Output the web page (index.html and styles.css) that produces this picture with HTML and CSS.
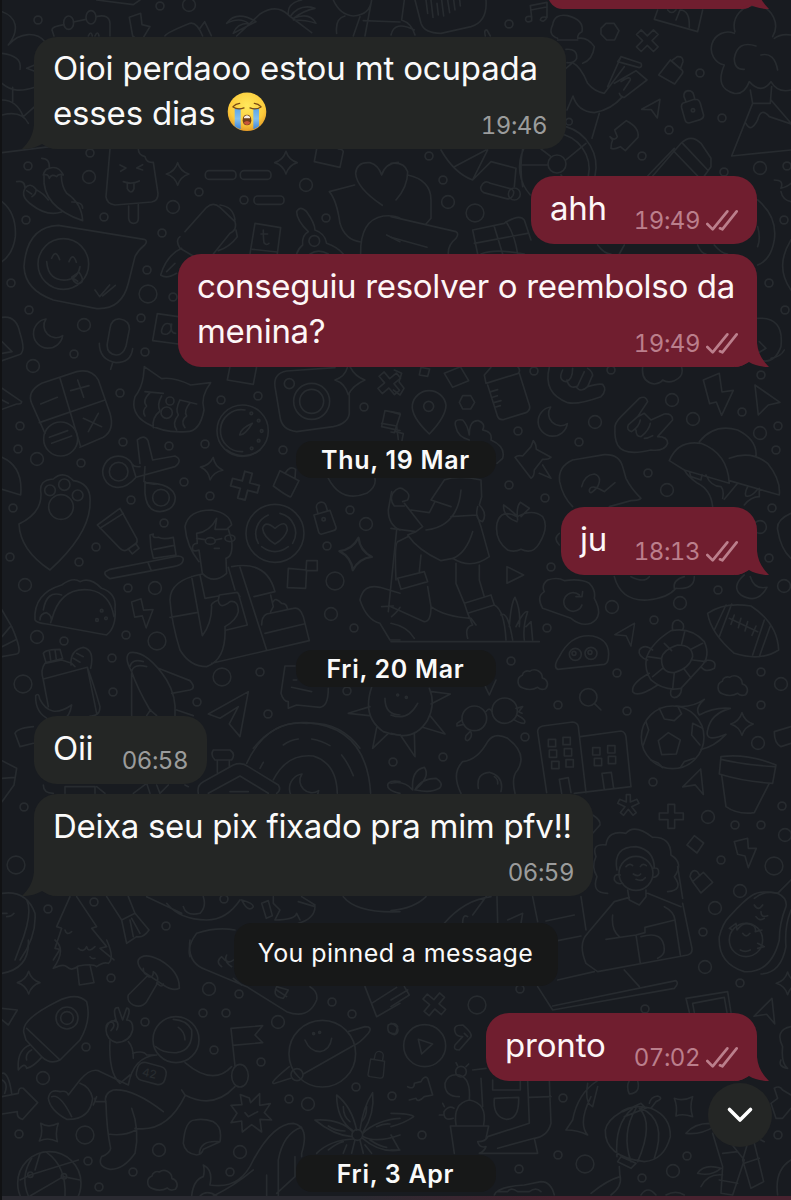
FILE: index.html
```html
<!DOCTYPE html>
<html lang="pt">
<head>
<meta charset="utf-8">
<title>Chat</title>
<link rel="stylesheet" href="styles.css">
</head>
<body>
<svg width="0" height="0" class="defs" aria-hidden="true">
  <symbol id="ticks" viewBox="945 625 102 66"><path d="M952 670l16 16 44-54M990 683l7 3 43-54" fill="none" stroke="currentColor" stroke-width="8" stroke-linecap="round" stroke-linejoin="round"/></symbol>
  <symbol id="tail" viewBox="0 0 34 44"><path d="M0 0H22V18C23 28 27 35 34 42C26 42 19 40 14 37C9 40 4 42 0 42Z" fill="currentColor"/></symbol>
</svg>
<main class="screen">
<svg class="wallpaper" viewBox="0 0 791 1200" aria-hidden="true">
  <defs>
    <path id="s" d="M38 20h0M160 6h0M90 153h0M28 166h0M199 192h0M104 217h0M26 220h0M162 233h0M326 218h0M147 270h0M244 200h0M11 283h0M29 310h0M141 318h0M74 354h0M145 352h0M120 393h0M20 426h0M18 449h0M123 442h0M169 446h0M205 444h0M81 463h0M221 400h0M258 396h0M364 407h0M283 450h0M184 482h0M173 297h0M13 508h0M10 557h0M131 500h0M210 496h0M164 523h0M96 547h0M79 562h0M350 510h0M327 546h0M128 588h0M126 635h0M64 641h0M112 658h0M113 692h0M197 702h0M260 672h0M268 714h0M354 628h0M347 691h0M509 24h0M700 73h0M722 118h0M669 130h0M642 156h0M429 156h0M443 180h0M724 172h0M784 220h0M769 283h0M787 166h0M785 310h0M534 371h0M611 370h0M761 375h0M518 431h0M579 442h0M742 412h0M778 426h0M776 450h0M648 473h0M509 485h0M545 498h0M551 567h0M772 508h0M769 558h0M718 590h0M654 620h0M547 628h0M511 661h0M617 673h0M558 705h0M627 711h0M761 672h0M761 705h0M525 737h0M443 757h0M393 762h0M653 782h0M735 825h0M761 825h0M782 806h0M721 860h0M24 807h0M48 909h0M94 902h0M166 926h0M224 899h0M111 978h0M239 994h0M145 1022h0M203 1013h0M226 1013h0M214 1050h0M86 1047h0M261 1062h0M332 1002h0M352 1014h0M356 1087h0M289 1099h0M392 1096h0M19 1134h0M88 1161h0M133 1172h0M230 1172h0M99 1187h0M703 932h0M740 983h0M520 989h0M645 1009h0M563 1098h0M558 1155h0M519 1169h0M422 1135h0M687 1156h0M642 1178h0M778 1135h0"/>
    <path id="m" d="M189 5h0M89 177h0M173 207h0M306 185h0M84 325h0M33 366h0M37 459h0M25 585h0M155 588h0M37 637h0M366 524h0M331 614h0M448 202h0M760 168h0M672 400h0M693 419h0M595 422h0M760 433h0M667 490h0M760 527h0M784 586h0M680 603h0M612 607h0M781 684h0M758 743h0M708 817h0M785 835h0M740 891h0M715 908h0M705 967h0M43 1078h0M308 1104h0M159 1150h0M240 1152h0M278 1022h0M209 989h0M673 1171h0"/>
    <path id="l" d="M475 213h0M148 294h0M157 641h0M23 684h0M222 677h0M335 581h0M16 865h0M85 1135h0M585 1164h0M477 1005h0M774 866h0"/>
    <path id="star" d="M0-34Q8-8 34 0Q8 8 0 34Q-8 8-34 0Q-8-8 0-34Z"/>
    <path id="plus" d="M-10-36h20v26h26v20h-26v26h-20v-26h-26v-20h26z"/>
    <path id="bolt" d="M-32-36l30-10 8 36 30-2-22 58-12-38-24 4z"/>
    <path id="cloud" d="M-32 24a20 20 0 0 1-2-38a16 16 0 0 1 22-12a24 24 0 0 1 38 20a19 19 0 0 1 10 32q-16 6-24-4q-20 12-44 2z"/>
    <path id="plane" d="M-34 0l66-38-12 76-16-34z"/>
    <path id="moon" d="M-6-44a44 44 0 1 0 50 50a36 36 0 0 1-50-50z"/>
    <path id="lock" d="M-28-10l48-14 18 50q2 8-8 11l-34 10q-8 2-10-6zM-16-14l-4-16a14 14 0 0 1 28-8l4 14"/>
  </defs>
  <g class="rings">
    <use href="#s" class="ring-s"/><use href="#s" class="hole-s"/>
    <use href="#m" class="ring-m"/><use href="#m" class="hole-m"/>
    <use href="#l" class="ring-l"/><use href="#l" class="hole-l"/>
  </g>

  <!-- top left: clouds, notebook, palm island, chillies, ice cream -->
  <g class="art" transform="scale(.3333)">
    <path d="M6 35C50 50 60 90 25 135C60 95 110 95 135 125M6 160C45 165 65 180 60 208M6 250C35 275 65 275 104 262M104 195L80 205L104 214M38 262V305M6 300Q50 300 70 350L104 320M6 345Q65 330 85 370M6 458L150 440"/>
    <path d="M162 108L156 90Q155 80 192 74M220 66L258 58M288 50Q328 40 330 70V108M265 108q8-18 12 0M285 108q8-18 12 0"/>
    <ellipse cx="206" cy="68" rx="15" ry="20"/><ellipse cx="273" cy="52" rx="15" ry="20"/>
    <path d="M388 52l34-12 4 34 24 6-28 46-24-18zM495 108Q500 98 570 70Q590 65 608 108M600 85l14-20 20 42M290 0L400 14L420 0"/>
    <path d="M710 108L780 42Q830 10 865 45L935 98M865 45Q860 10 905 0M870 50Q900 10 945 25Q915 30 880 55Q930 35 948 70Q920 60 880 60M768 65Q710 30 680 70Q720 50 745 70Q710 70 700 100L768 65M1000 0Q1020 45 1060 48Q1110 45 1115 0L1095 108M1090 62L1200 66M1010 100Q1005 55 1035 48M1060 108L1080 50"/>
    <path d="M50 545Q75 540 75 565Q90 545 108 568Q110 580 96 590M75 565Q60 590 96 615Q140 650 185 636M80 572l15 10M125 475Q150 475 148 505Q175 495 190 525Q175 520 170 530Q155 520 148 535Q145 520 130 525Q135 505 148 505M132 528Q125 620 248 662Q245 610 200 580Q185 560 184 528M110 570Q130 580 145 600M248 625Q248 605 215 606"/>
    <path d="M330 447L318 590Q320 612 345 615L455 606Q475 603 474 580L460 487Q440 490 435 470Q415 465 415 447M386 618V655q2 15 15 15q14 0 14-15V614M360 495l18 9-16 10M428 494l-18 10 18 6M370 545q25 10 48-2M382 548v18q12 20 20 0v-18"/>
    <use href="#star" x="533" y="522"/><use href="#star" x="858" y="488"/>
    <rect x="616" y="512" width="92" height="26" rx="11"/><rect x="721" y="512" width="92" height="26" rx="11"/><rect x="762" y="588" width="90" height="25" rx="11"/>
    <path d="M950 447L943 485L1020 502L1030 455Q1028 447 1015 447M1147 616Q1070 565 1067 520Q1070 485 1110 488Q1135 495 1145 525Q1155 490 1195 487M1064 555L988 575Q1010 600 1020 670Q1035 720 1082 726M1082 762Q1080 660 1150 648Q1185 645 1200 655M1160 705L1200 725"/>
    <path d="M6 605Q50 640 46 710Q40 760 6 785M540 710Q525 720 540 745L600 780M555 695L620 622Q640 605 660 622L705 665Q712 690 690 700L640 762M660 615Q700 620 705 660M708 690L712 710Q690 740 655 752M545 745Q500 765 482 825Q500 838 530 820M500 815L525 790M765 670L842 683L832 762M765 670L750 762M757 748L832 756M790 690q0 25 2 38q8 10 15 2M783 702h20"/>
    <path d="M925 695Q890 660 890 635Q900 615 920 635Q945 670 945 690M945 690Q975 700 980 730Q1010 740 1030 762M925 695Q905 705 908 735Q895 745 890 762M930 762Q955 745 985 762"/><circle cx="943" cy="723" r="16"/>
    <path d="M175 676L432 718Q445 722 434 735Q415 750 405 770L385 850Q365 930 290 926L160 900Q75 870 72 800Q80 680 175 676Z"/>
    <circle cx="190" cy="792" r="76"/><path d="M140 785q5 60 60 55q35-5 40-40M155 775q12-30 24 4M207 785q12-30 22 2M215 832l22-15q15 20 8 30q-18 12-30-15l18 12M285 870l14 20 30-35M308 888l38-32"/>
  </g>

  <!-- top right: microphone, wheel, chef, clouds and volcano -->
  <g class="art" transform="translate(391) scale(.3333)">
    <path d="M72 0L90 70Q100 100 150 100L240 80Q290 65 285 0M105 0l5 40M120 0l6 52M138 10l4 35M152 0l6 48M170 0l6 38M188 0l4 30M206 0l2 18M0 105Q10 60 70 90M40 0l-8 60q30 10 40 45M283 108q-5-20 5-18l10 18M404 60q-2-14 18-10v12q-14 8-18-2M422 52l-4-35 50-10 0 45q-18-4-20 8q10 10 20-8M420 30l46-9"/>
    <path d="M500 115Q470 105 485 75Q490 40 530 47Q580 60 573 95Q560 100 560 115Q590 110 610 140Q605 180 575 190M500 120l60 0M525 148Q560 145 557 175Q550 190 528 188M525 205L545 188Q570 200 590 250Q610 275 640 280L700 200M690 170L750 190Q755 200 745 203L680 185ZM650 260L690 170M670 250L735 212L768 240L700 292Q690 292 685 280M690 245q30-20 28-5l-20 30M528 330L546 288Q560 335 610 338Q660 330 695 290M625 340L603 415"/>
    <path d="M525 380A125 125 0 0 1 612 528M500 400A107 107 0 0 1 592 528M398 447A125 125 0 0 0 418 585M395 447Q385 500 395 560M395 495H470M525 480L585 430M510 525l8 10M480 470L450 447"/><circle cx="498" cy="492" r="27"/><circle cx="534" cy="365" r="10"/>
    <path d="M630 85l15-15h24l15 22-13 28h-24l-17-18zM803 225l35-45 35 30q5 5 0 12l-22 30zM845 180l14-10q18-2 17 15l-8 22M875 310l35-12q14-2 18 12l10 36q0 10-10 13l-34 10q-10 0-12-10l-10-35q-2-10 3-14M885 305l-6-15q-2-15 12-18q14 0 17 12l4 15"/><circle cx="906" cy="331" r="5"/>
    <use href="#plus" transform="translate(769 122) rotate(45)"/>
    <path d="M752 328l55-30-8 56-18-25zM657 410q15 15 22 0l-8-20 35-28q40 20 35 50l-38 40-15-12q-20 10-28 5q0-15 5-25z"/>
    <path d="M785 528L870 430Q900 400 930 430L960 475V500L940 528M845 450L920 528M770 528L850 445M875 430L950 510M800 30L790 58L920 95L935 30M830 30q12 15 25 0M855 60l12-30q30 0 28 52"/>
    <path d="M1032 95A62 62 0 1 1 1145 110M1030 100A50 50 0 1 0 1000 195M1000 195Q970 265 1030 280Q1060 285 1075 245Q1110 285 1140 245Q1160 280 1200 270M1095 138Q1040 120 1030 175Q1030 210 1060 208M1110 165Q1150 155 1160 210M1150 115Q1170 100 1200 105M1078 270L1085 310H1138L1142 260M1085 310L1022 468L1200 450M1140 300L1200 370M1065 370Q1080 400 1100 360Q1110 320 1135 350L1200 372"/>
    <path d="M0 490Q40 485 50 515Q50 560 15 600M50 525Q120 540 120 600V655L105 672M0 650L195 695Q205 700 195 715Q170 735 172 762M0 712L108 742M150 450Q190 520 245 540L290 450M190 500L285 450M245 540L300 485L375 505L370 560M270 560q10-22 28-10l60 16q15 5 8 20q-8 14-20 10l-68-18q-12-8-8-18M245 690Q245 690 340 670Q385 640 400 660L420 720M245 690L260 762M310 680L335 762M345 665Q370 700 380 762M250 730L410 700M270 762Q310 745 400 762"/><circle cx="370" cy="582" r="18"/>
    <path d="M1100 600Q1160 650 1150 720Q1140 780 1100 795M1100 680Q1110 715 1100 740M620 735Q640 762 660 762M700 735l-15 27M920 735q10 25 25 27M970 735q20 25 40 27M1150 540q30 0 20 25q20-5 30-15M1170 575q5 25 30 30M1200 720Q1150 800 1200 870M1100 955Q1180 950 1170 1040Q1150 1095 1105 1080M1105 1025l20 20-20 12"/>
  </g>

  <!-- left, upper middle: calculator, cat, camera, timer, scissors -->
  <g class="art" transform="translate(0 200) scale(.3333)">
    <path d="M6 352Q50 345 60 400Q80 460 55 465L6 482M6 425l30 30-30 5M6 565L65 605Q65 612 50 612L6 628M25 610l-19-10"/>
    <use href="#moon" x="144" y="401"/>
    <path d="M330 385q5-30 30-28q30 5 28 32l-10 50q-10 28-30 26q-30-5-26-35zM298 430q0 50 50 58q45 0 50-42M338 488l-6 20M535 350L472 341L458 422L535 432M485 390q5-25 25-18q10 20-8 30q-20 4-17-12M515 372q-5 28 12 28M690 500L682 540L760 553L770 500"/>
    <path d="M95 610Q80 575 125 550L230 515Q275 505 295 540L330 640Q345 690 310 712L240 742M95 610L135 700M180 535L242 740M118 668L315 600M122 612l50-20M212 572l55-15M233 540l18 52M250 655l55 25M295 640l-30 55M148 712l55-20M155 730l60-22"/><circle cx="182" cy="717" r="51"/>
    <path d="M433 500L485 536Q520 530 572 555L632 548Q600 590 612 630Q600 695 560 695Q490 700 440 670Q390 640 405 590Q425 565 430 530ZM435 575L490 580M540 600L590 612M450 578q-25 25-10 40q-15 15-5 30M485 588q-15 25-5 45q-25 20-20 50M540 600q-15 30-5 45q-20 25-5 45M570 608q-20 25-10 40q-20 15-5 35"/><circle cx="500" cy="638" r="17"/><circle cx="510" cy="603" r="12"/>
    <circle cx="728" cy="692" r="77"/><path d="M728 755A63 63 0 1 1 735 630M757 670q-35 15-38 35q15 2 38-35"/><circle cx="754" cy="640" r="4"/><circle cx="776" cy="662" r="4"/><circle cx="785" cy="693" r="4"/><circle cx="776" cy="722" r="4"/><circle cx="755" cy="745" r="4"/>
    <path d="M825 560Q820 520 860 513L1005 503M1048 582V640Q1045 670 1000 680L890 695Q845 690 840 650L825 560"/><circle cx="935" cy="604" r="54"/><circle cx="935" cy="604" r="36"/><circle cx="868" cy="551" r="15"/>
    <path d="M1050 500Q1065 530 1095 540Q1060 555 1045 584Q1035 550 1005 540Q1035 530 1042 503"/>
    <use href="#plus" transform="translate(1168 550) rotate(50)"/>
    <path d="M1155 632L1145 680L1200 692M1155 632L1200 640M1145 670l45 8 5 40"/>
    <path d="M412 720q20-18 32 2L458 780L525 768Q550 780 525 800L408 832M412 720L420 790M435 800L432 845Q450 855 470 852"/><circle cx="356" cy="815" r="28"/><path d="M395 790L408 832Q380 865 350 862A47 47 0 1 1 395 790Q402 802 420 800"/>
    <use href="#star" transform="translate(635 806) rotate(8)"/><use href="#plus" transform="translate(735 857) rotate(15) scale(1.15)"/>
    <path d="M840 812L897 842L873 890Q870 895 820 858ZM855 820q15-25 32-12l-2 28M6 772Q70 800 62 885L6 868"/>
  </g>

  <!-- right, upper middle: jar, fists, pushpin, mushrooms, hiker -->
  <g class="art" transform="translate(391 350) scale(.3333)">
    <path d="M10 60l22 10-8 25 15 20-12 20-20-15M90 52l26 5-6 22-25-4zM160 70l48-20 25 42-48 20zM0 185l28 8-18 55-10-2M15 245l22 6-4 20"/>
    <path d="M115 252Q60 200 64 165A51 50 0 0 1 165 165Q165 200 115 252Z"/><circle cx="113" cy="169" r="15"/><path d="M205 157l10-20h24l12 20-12 20h-24z"/>
    <path d="M285 100L382 70Q390 60 380 50M285 100L280 75L300 52M290 105L320 200Q325 212 340 208L405 188Q420 180 415 165L385 70M300 125l20-6M305 142l14-5M308 158l22-6M312 172l16-5"/>
    <path d="M475 52Q455 130 530 158Q560 165 630 140Q650 120 635 103Q620 100 590 110M515 60Q500 90 525 95Q545 90 545 55M528 90Q535 120 560 108L580 65M555 110Q570 130 590 110L605 75M590 55Q605 65 605 78"/>
    <use href="#moon" x="485" y="215"/>
    <path d="M672 235Q670 220 690 200L745 145Q765 135 770 155L740 200L760 190L780 210L820 192Q845 190 845 210L800 260Q830 260 830 280Q820 305 780 300Q700 320 680 285Q670 265 672 235M740 200L712 225Q705 240 722 245Q745 230 748 210M735 240Q735 260 750 260Q775 240 778 220M760 265q10 0 25-8"/>
    <path d="M755 52Q750 95 790 102Q810 100 815 90Q830 100 850 92Q880 80 872 52M937 90l48-20 8 56 34-5-35 75-16-40-20 5zM1092 105l75 52-35 8-30 30z"/>
    <path d="M835 332Q860 270 930 280Q1010 310 1015 400L880 360M835 332L880 360M925 275Q970 220 1040 240Q1100 270 1095 320M1015 325Q1080 300 1130 340Q1170 390 1165 435L1015 392M880 360Q890 380 920 400Q960 420 965 470M895 365l5 15 30 10 3-16M945 375Q960 410 990 410Q1000 420 995 445M1000 448L1040 400M1105 415L1105 440Q1080 440 1060 465M1070 410q-10 20-5 28q15 5 35-20"/>
    <path d="M427 272Q435 280 436 298L480 322Q470 330 455 328L430 360Q430 380 420 385L372 322Q380 315 395 318L420 290ZM455 345L480 385L445 370M195 232Q185 205 215 210Q230 225 235 255Q235 210 262 212Q285 220 275 240Q305 245 300 270M195 232Q200 260 235 270M300 270Q345 290 335 325L318 340"/>
    <path d="M545 330L640 314Q685 312 695 350L705 385Q720 415 750 445Q745 452 720 452L655 470M545 330Q500 350 506 395Q515 440 545 470M572 410Q580 375 610 372Q635 380 620 410Q595 440 595 420Q600 400 640 425L672 398"/>
    <path d="M378 500Q330 475 318 520Q310 570 350 600Q370 608 390 598Q425 615 445 580Q475 530 455 500Q425 475 378 500ZM380 500Q360 480 338 465Q335 500 378 515M380 510Q375 470 388 457L415 475L390 500"/>
    <path d="M5 430q20-25 35-10q20 10 10 30l-15 5M5 430q-10 20 5 38h30M40 460L95 530L75 545L0 535M160 390L120 450L180 470M60 480L115 488L132 455M210 420Q200 530 105 540M160 390Q200 375 270 390L272 440L265 465Q290 490 275 515Q250 510 260 470M180 500L258 495L270 530L295 620Q240 660 185 625L150 632Q80 600 50 555L75 545M245 545Q225 610 185 625M90 615L85 665M20 575Q10 580 15 690M20 575L50 560M20 685L100 665L110 695L30 718ZM110 710L120 770Q120 815 100 815L0 770M195 640V700L220 760M265 645V690L280 740M220 760L300 735L310 765L230 790ZM230 790L245 825Q220 830 230 865M310 765Q340 780 345 870M120 770Q160 800 240 805L255 825M0 875H445M0 820Q50 830 70 865M330 795Q350 780 365 870M355 830Q360 760 372 742Q390 780 385 830M375 830Q400 780 410 785Q395 830 400 870M405 830l15-15 5 55"/>
    <path d="M348 650V700L398 675ZM470 690Q500 680 520 692Q570 685 595 700Q615 720 610 745Q640 800 600 820Q570 830 540 805L455 775Q435 740 460 725Q450 705 470 690Z"/><path d="M573 765A28 28 0 1 1 565 735M555 740l18 0 2-15"/>
    <path d="M670 680Q690 755 770 750Q830 745 855 715Q910 720 910 680M720 680q40 20 55 0M850 715q-5-25 30-35M505 550q-20 15 0 35"/><path d="M1060 675Q1020 710 1050 735Q1100 765 1128 712Q1090 720 1078 680"/>
    <path d="M1200 490Q1155 510 1160 540Q1170 600 1200 625M1140 25Q1170 20 1180 0"/>
  </g>

  <!-- left middle: paw, toothbrush, reader, taco, bottle -->
  <g class="art" transform="translate(0 450) scale(.3333)">
    <circle cx="150" cy="121" r="16"/><circle cx="193" cy="104" r="17"/><circle cx="233" cy="136" r="16"/><circle cx="183" cy="171" r="37"/><circle cx="483" cy="143" r="25"/>
    <path d="M123 130Q115 90 160 87Q190 60 220 92Q275 100 270 160Q270 250 150 360Q60 300 57 222Q125 190 123 130ZM435 95L435 130Q440 185 480 185Q525 180 526 143Q520 100 435 98"/>
    <path d="M292 225L360 175L410 265Q415 280 402 285L380 300Q370 305 360 295ZM300 235L370 190M385 297l22-17 10 15-20 17zM450 255Q450 290 460 325L528 315L520 262Q490 270 475 262Q455 265 460 252zM462 298l60-12M330 358L535 318Q555 320 548 335Q545 345 520 350L330 386Q310 375 316 365ZM445 340l8 20"/>
    <path d="M597 335Q560 290 555 230Q565 180 635 180Q690 190 695 225L680 238H645L650 205Q630 245 590 250L592 280Q575 280 578 300Q585 305 597 300L607 370Q640 405 680 370L678 325Q700 320 695 270L685 238M590 265l25 4M645 270l20-4"/><ellipse cx="631" cy="273" rx="15" ry="10"/><ellipse cx="690" cy="265" rx="15" ry="10"/><path d="M643 295h15"/>
    <path d="M607 372Q510 390 510 450Q515 520 540 600Q570 650 620 650Q680 630 675 530M510 502L590 488M575 380L607 557Q635 520 635 470Q630 460 655 450L658 435L712 427L720 440M600 375L615 445L655 438M685 352L705 420M695 350Q800 330 825 425L762 440M720 352L800 600M675 530Q710 510 715 485Q715 450 690 455Q660 480 655 452M715 430L742 525L680 540M635 640L928 572L910 500Q900 470 880 475L800 492Q785 500 785 525M795 550L912 522M812 435L820 470Q815 480 812 485M820 455Q825 440 845 460Q860 460 862 475"/>
    <circle cx="825" cy="250" r="87"/><path d="M825 282Q790 260 788 235Q795 210 825 235Q860 205 862 240Q855 265 825 282ZM775 280A60 60 0 0 1 805 195M840 190A60 60 0 0 1 878 280M865 290Q825 320 785 290"/>
    <use href="#lock" transform="translate(970 205)"/><circle cx="971" cy="208" r="5"/>
    <use href="#star" transform="translate(1067 312) rotate(10) scale(1.45)"/>
    <path d="M865 355l55 5-3 55-55-2zM920 332h32v30h-34zM985 85Q1025 160 1100 130Q1130 110 1125 85M680 0Q730 35 780 0"/>
    <path d="M105 510Q100 430 185 405Q220 380 240 395Q270 380 305 415Q350 430 345 475Q350 530 320 555L140 522Q110 520 105 510ZM155 510Q180 410 270 420Q330 430 342 500M130 480Q140 420 185 435M120 510q0-20 20-22q20 10 12 30"/><circle cx="305" cy="482" r="4"/><circle cx="318" cy="505" r="4"/><circle cx="291" cy="510" r="4"/>
    <use href="#bolt" transform="translate(425 490) scale(.95)"/>
    <path d="M130 610q5-12 50-12l8 28-50 12zM148 602l4 28M165 600l4 28M135 640L185 630L215 640L225 650M135 640Q120 660 130 690L145 770M130 687L262 652Q280 700 300 770Q300 800 270 798M262 652L290 790M213 645Q210 600 250 592Q285 600 272 655M220 625l20 12M230 610l20 10M107 737q10-10 12 10Q150 810 215 765Q210 800 185 815M107 737Q105 790 150 810"/>
    <path d="M395 665Q370 620 390 608Q440 600 500 690Q530 740 525 797M395 665Q410 710 450 780L470 797M395 665Q400 640 440 650M390 650Q395 625 430 635M475 655L570 692Q590 715 570 720L515 730M395 670V797M530 780L580 797M440 797l12-18"/>
    <path d="M625 792L745 725L720 860L688 822L715 770L660 805ZM855 648H885M855 648L843 730Q850 755 865 755V775L890 765L960 772Q985 770 985 715M880 690h10M875 712L935 725M1110 770L1045 790L1108 797M1115 712Q1085 800 1150 845Q1175 855 1200 855M1130 833L1118 895L1165 850M1155 745q0 50 45 50"/>
    <path d="M760 895Q830 810 920 820Q1020 815 1080 895M850 885q20-15 45-18M935 867q30 5 55 20M45 850Q50 835 100 830M45 850L60 890L100 880M6 480L35 530Q70 610 50 612L6 620M6 560l25-30M6 590l40-20"/>
    <path d="M1165 180Q1165 225 1200 240M1175 125L1165 180M1080 450Q1090 400 1140 412L1200 430M1080 450Q1100 510 1140 520L1170 570H1200M1190 240L1165 485M1145 470l35-2M1175 500q20-18 25-28"/>
  </g>

  <!-- right middle: turtle, football, buildings, glasses, sun -->
  <g class="art" transform="translate(391 600) scale(.3333)">
    <path d="M500 208Q485 200 505 170Q540 100 605 108Q660 120 652 175Q650 190 640 193Z"/><circle cx="553" cy="163" r="18"/><circle cx="600" cy="160" r="18"/><circle cx="549" cy="160" r="6"/><circle cx="597" cy="157" r="6"/>
    <use href="#plane" transform="translate(702 104) scale(.9)"/><use href="#cloud" x="428" y="240"/><use href="#cloud" x="1028" y="258"/>
    <path d="M766 175Q780 130 840 92Q900 80 940 125Q960 170 930 200L870 265Q820 275 780 240Q760 210 766 175ZM812 175Q815 150 860 135Q905 135 905 170Q895 205 850 218Q810 220 812 175ZM820 130l22 22M882 92l-10 40M935 130l-35 18M905 180l40 5M880 208l20 26M850 218l-5 50M815 205l-30 25M770 170l42 6M845 90Q840 60 862 60Q885 70 875 90M770 180Q740 170 745 150Q760 130 785 150M775 220Q720 250 725 275Q740 295 800 255M945 180Q980 180 970 205Q945 220 930 200M840 270Q835 290 850 293Q870 290 872 265"/>
    <path d="M950 40Q1000 5 1080 18Q1160 70 1163 150Q1110 185 1030 160Q960 100 950 40ZM1005 15L970 90M1022 12L985 110M1120 60L1085 165M1138 78L1105 170M1015 55L1100 95M1030 45l-10 28M1050 55l-8 28M1070 65l-8 28M1095 78l-12 28"/>
    <circle cx="592" cy="292" r="26"/><path d="M610 310l20 20"/><circle cx="250" cy="355" r="37"/><circle cx="341" cy="332" r="38"/><path d="M285 335q10-15 18 0M213 360l-15 10 0 8 20-5M375 325l20-5-12 15 10 5M378 345q30 15 22 25q-15 0-32-12M240 392l-15 15q-5 15 5 15q15-10 10-25"/>
    <path d="M0 400Q70 425 110 360Q135 310 115 265M122 275L178 282L120 312M118 348L162 402L95 382M70 398L72 470L28 405M0 345Q50 365 80 310"/><circle cx="20" cy="285" r="3"/><circle cx="46" cy="292" r="3"/><path d="M315 240l-20 45-12-25"/>
    <path d="M210 580Q180 520 215 485Q260 480 290 425Q310 395 350 415Q410 460 380 510Q360 530 372 580M262 565Q255 520 295 517Q340 530 330 575"/><path d="M310 530q12 8 10 22M0 550Q40 540 65 570Q60 510 100 502Q120 530 72 570Q90 535 135 535Q160 550 145 565Q120 580 75 570"/>
    <path d="M467 578L440 395Q440 382 455 378L545 366Q560 368 562 380L585 578M568 410L690 393Q702 395 705 410L720 560L550 580M512 580L505 538L532 533L540 578M640 568L633 520L661 517L668 565"/>
    <path d="M472 418h22v22h-22zM475 450h22v22h-22zM482 484h22v22h-22zM516 412h22v22h-22zM520 446h22v22h-22zM525 479h22v22h-22zM605 443h22v22h-22zM650 437h22v22h-22zM610 475h22v22h-22zM652 469h22v22h-22z"/>
    <circle cx="845" cy="412" r="94"/><path d="M832 398l36 22-12 42-44 2-10-42zM805 325l15 32 30 5 22-20-10-20M765 365l8 25-16 45M935 385l-30-15-3 35 25 30M780 480l20 8 15 15M870 500l10-15 30-10M855 318Q900 325 940 298Q910 325 925 345Q970 320 1018 325Q960 340 950 390Q940 430 1005 403Q970 440 930 448"/>
    <use href="#star" x="1053" y="372"/><use href="#plane" transform="translate(908 552) rotate(-15)"/>
    <path d="M990 470Q1070 460 1155 495L1145 550Q1060 545 985 522ZM990 478Q1060 495 1150 500M992 525L1005 620Q1040 645 1090 638L1135 550M1200 380L1150 395Q1150 430 1170 440L1200 430"/>
    <path d="M-6-34h12v22l20-8 6 12-22 10 14 18-10 8-14-18-14 18-10-8 14-18-22-10 6-12 20 8z" transform="translate(712 618)"/><use href="#plus" x="841" y="649"/>
    <path d="M605 645q25 15 22 30l-22 25M615 770Q600 730 645 735Q650 690 705 700Q730 670 785 712Q840 710 840 765Q880 790 850 830Q880 870 830 875M615 770Q600 800 618 830Q600 880 650 880"/><circle cx="735" cy="820" r="51"/><path d="M678 810Q665 740 735 740Q790 750 790 805M688 825q-20-5-18 15q8 15 25 10M785 805q20-5 18 15q-5 12-18 12M705 800q12-12 20-3M748 800q8-12 18-3M727 822q15 10 22 0M735 838q18 8 28-5M860 800L875 895"/>
    <path d="M888 735l22-28 28 22-20 30zM1030 725l40-10 2 30 24 0-24 58-10-35-22-5zM905 845l32-28 28 30-35 32zM905 845l-8-15q5-25 22-15l8 12M1090 895Q1120 870 1160 880L1200 840"/>
  </g>

  <!-- left lower middle: house, vinyl, pine, bow -->
  <g class="art" transform="translate(0 700) scale(.3333)">
    <path d="M6 182L50 205L42 255L6 305M6 235L45 232M740 190Q800 60 920 68Q1100 80 1112 280M820 240Q860 160 940 168Q1010 190 1012 280M780 205l10-18M1025 165q20 25 35 62"/>
    <path d="M640 150h50q18 12 5 30h-50q-15-15-5-30M652 182v35M688 182v18M595 280Q590 255 610 245L700 195Q725 185 745 200L835 255Q845 270 830 280M625 280L720 228L805 280M690 275h55M400 280L440 250L450 280M470 255l10 25 25-25M130 255q0 25 30 25M195 280V260h90v20M290 260l25 20M555 255l10 5"/><use href="#moon" x="912" y="266"/>
    <path d="M1200 280Q1155 270 1165 250Q1175 240 1200 245M6 580Q80 570 105 640Q110 710 60 780M80 600Q100 640 60 740L45 780M20 650q15 0 22-10M6 640h15"/>
    <path d="M210 590L170 680L185 685L165 745L180 748L160 780M230 590L290 680L275 685L320 740L300 745L342 780M195 690q5 18 20 5M235 745q15 15 25-5q5 20 25 0M270 770q5 8 15 5"/>
    <path d="M320 590L365 660L405 640L385 590M405 640L447 690Q430 715 410 710L380 730L365 660M390 660l10 50M395 655l25 45M440 590L545 640M500 610Q540 660 620 660Q680 660 720 600M550 620Q560 650 600 640Q620 620 610 590M725 600q35 10 35 20q-15 20-35-20M785 610l20-8 12 45-18 8zM820 590v20l20 20-15 30q60 0 65-20l10 20M905 590l40 25M895 605l50 15q0 35-50 50M1030 590Q1070 640 1200 635M705 690Q650 680 590 700Q560 740 570 770"/>
  </g>

  <!-- lower left: rocket, astronaut, planet, lily, globe -->
  <g class="art" transform="translate(0 940) scale(.3333)">
    <path d="M6 100Q90 85 85 0M165 0Q200 30 160 85Q190 70 200 80Q215 95 235 78Q280 70 290 80Q310 65 325 70Q345 55 320 0M232 82L238 135L282 128L270 75"/>
    <use href="#star" x="86" y="128"/>
    <path d="M72 280Q60 240 170 185Q230 155 260 185Q275 240 240 300L180 360Q150 375 125 350L78 300ZM80 265L180 360M90 315Q50 330 55 390Q75 365 80 385Q100 380 125 352M95 330q-20 10-15 30M6 205L52 210L25 255L6 240"/><circle cx="201" cy="234" r="33"/><circle cx="201" cy="234" r="19"/>
    <path d="M415 60Q430 35 480 60Q540 95 538 145Q520 155 490 135L430 95Q410 75 415 60ZM430 85Q430 105 445 105L385 165Q380 185 400 195Q425 205 440 185L472 130Q485 145 490 132M445 110Q460 115 460 95Q480 110 470 130M570 0Q560 70 620 90L740 140L860 215Q925 240 950 180Q955 155 930 140M665 80q-20-15 0-30q20 25 35 10M680 45q-10 20 15 35M700 115l25 20M830 140l35 10-15 25q-35-5-20-35M860 170l-30-20"/>
    <path d="M318 270Q325 235 350 245Q335 200 355 203L368 240L380 204Q395 205 380 240Q400 240 398 270Q390 305 350 308Q320 300 318 270ZM318 265q0-20 20-18q10 10-5 25M345 240q15 10 5 30"/>
    <path d="M330 300Q325 400 360 430L390 405M385 305Q400 320 400 355M398 340Q430 330 440 345L465 345M385 435L295 392Q270 385 240 420L205 465M385 435Q400 350 470 345M555 368Q640 440 695 380M545 450L555 465Q640 510 705 440M555 468Q500 580 405 565M490 515Q400 445 340 450Q310 460 318 490Q320 570 332 625M395 505Q420 570 405 640Q370 690 330 688Q290 680 305 650Q330 640 332 625M325 582Q370 590 408 570M145 475Q150 445 180 455Q200 450 205 465M145 475Q150 510 200 538Q270 540 278 475Q270 440 240 430M155 470Q180 460 215 530M285 475L285 485L318 485M290 470l-10 25"/><circle cx="528" cy="299" r="69"/><path d="M467 320Q490 340 530 338Q580 330 575 270Q560 240 520 238M535 262Q555 275 555 300"/><rect x="410" y="373" width="88" height="55" rx="20" transform="rotate(15 454 400)"/><text x="427" y="412" transform="rotate(13 450 400)">42</text>
    <ellipse cx="720" cy="407" rx="25" ry="34"/><path d="M705 378L693 265L788 257L765 285L788 308L698 316M6 400Q25 395 35 460M6 470L55 460Q55 440 70 445L113 488L68 538Q50 535 52 515L6 522M6 420q20 10 8 40M122 550Q145 565 175 550Q165 575 172 605Q145 590 118 603Q130 580 122 550Z"/>
    <circle cx="967" cy="341" r="100"/><circle cx="891" cy="404" r="18"/><path d="M910 402L1058 318M1045 275L1095 260Q1120 260 1105 280Q1080 310 1058 318M868 380Q800 435 825 430L872 415M915 300q15 35 45 35q30-5 35-40"/><circle cx="941" cy="281" r="3"/><circle cx="959" cy="277" r="3"/>
    <path d="M752 488l27-27 0 35 32-5-18 27 22 22-35-2 5 38-30-22-28 22-2-33-32 5 18-28-18-24 33-2-5-30 27 10z"/>
    <path d="M735 518l10 12 28-15M585 540Q555 540 550 610Q555 640 590 645Q605 645 610 628L660 605Q668 560 640 545Q610 535 585 540M598 643Q600 600 655 605"/>
    <circle cx="1072" cy="585" r="16"/><path d="M1060 573Q1010 540 1010 465Q1055 500 1070 570M1080 570Q1090 500 1118 458Q1125 520 1090 575M1055 590Q1000 585 945 540Q1020 535 1058 575M1088 580Q1130 540 1200 535M1090 590Q1130 610 1200 585M1088 595Q1140 640 1200 630M1060 597Q990 600 950 640M1065 600L1055 640M1080 600L1090 640M1030 500q0 30 20 45M1100 500q0 30-15 45M985 558q20 15 50 15M1130 560q20-10 40-8M1110 600q30 20 50 22M1030 605q-20 5-45 25M1040 615l-10 25M1095 615l20 25"/>
    <circle cx="148" cy="730" r="95"/><path d="M95 655Q60 710 85 768M60 720L90 705L235 660M190 710L240 720M140 637Q200 680 195 768M105 690L120 640M90 768L190 710"/><circle cx="91" cy="704" r="8"/><circle cx="192" cy="709" r="8"/>
    <use href="#cloud" x="490" y="722"/><path d="M575 768Q580 720 610 710Q615 690 610 675Q640 690 630 735Q720 750 760 660Q820 550 880 550Q930 560 905 640V650M905 562Q850 580 835 660V768M640 768Q700 740 760 690M800 768V705M830 760L885 710V650M600 768q20-20 50 0"/>
    <path d="M1095 140L1130 230L1200 190M1115 190L1190 142M1165 255q20-10 28 5l-5 20q-30 5-23-25"/><use href="#lock" transform="translate(1130 375) rotate(25) scale(.85)"/>
  </g>

  <!-- lower right: laptop, avocado, cactus, lantern, bamboo -->
  <g class="art" transform="translate(391 840) scale(.3333)">
    <path d="M0 212Q70 205 105 170M160 250Q220 180 300 170M318 170L320 250M215 250q0-30 15-20M350 240l45-20-5 30M245 225l40-55M425 170L440 245M465 243L550 225M500 302L570 288M570 170L585 270M710 150L715 180L745 195L765 170L765 150M715 172L670 185L590 280Q560 310 585 370L620 395L890 345Q905 340 903 325L875 190M665 225Q660 270 685 290M770 160L870 200M820 200Q850 215 852 240L868 345M645 298L735 285L762 278V262L852 240M735 285L748 370M750 290Q820 270 820 330Q820 345 800 355M610 395L500 420M700 390L745 440M440 440L485 510L850 445Q865 430 855 422L485 498"/>
    <path d="M1015 230Q1060 180 1085 165Q1110 150 1160 160Q1190 175 1185 200Q1165 250 1165 300Q1140 400 1060 395Q980 370 985 290Q995 250 1015 230ZM1200 210Q1180 260 1185 320Q1170 400 1110 402M1090 195q12 20 25 0M1110 215q0 20 20 12M1095 230q10 15 25 5"/><circle cx="1065" cy="300" r="50"/><path d="M1025 270l-10-5 20-15 3 20q15-20 30-20q30 5 25 25l20-5M1100 310l20 10-20 5M1055 280q10 15 22 0M1048 330q15 8 30 0"/>
    <path d="M885 475L1010 455L1020 517M885 475L895 517M905 490L1000 472L1008 517M905 490L910 517"/><use href="#star" x="1190" y="430"/><use href="#plane" transform="translate(1122 520) rotate(-15)"/>
    <use href="#plus" transform="translate(130 493) rotate(40)"/><path d="M0 500L55 465L40 440M0 480L50 450M0 550q25 10 20 25q-5 15-20 5"/>
    <circle cx="101" cy="617" r="63"/><path d="M82 598L125 612L92 642ZM192 575Q185 555 215 555Q245 580 240 590L205 630Q185 630 192 615L215 590Q195 590 192 575M220 580l10 10M50 740q20 10 20-10l20-5q10-20 20-10l15 50-25 5q-20 20-25 5l-20 5M0 820Q60 820 68 830Q40 850 0 860M0 885L25 930H0"/>
    <circle cx="210" cy="695" r="16"/><path d="M205 770Q160 770 162 730Q170 700 205 705Q240 715 235 780M195 855Q185 790 235 780Q290 790 278 855M178 858H293L285 895M178 858L190 940M187 835q-30 10-28-20q15-20 30-10M160 800l-5-10M155 825h-10M200 678l-5-10M225 680l8-8"/>
    <path d="M245 690L285 685M305 720V750H388V720M310 775L383 772Q385 840 345 838Q305 830 310 775ZM270 715L275 800M410 722L415 850L290 890Q285 905 260 905Q265 925 285 920Q280 935 265 940H440L430 895M475 720L480 850Q470 890 430 895L320 925M415 772L480 770M620 722Q560 760 545 840L525 870Q560 870 590 885M600 770Q560 850 590 885M740 722Q750 760 715 762Q705 740 715 722M590 730Q580 790 605 800L620 740"/>
    <path d="M685 820Q720 790 780 805Q840 830 838 890Q820 960 760 965Q640 950 643 870Q650 840 685 820ZM725 805Q670 850 678 950M735 805Q690 880 720 965M745 805Q790 850 740 965M750 805Q830 840 790 955M695 815L750 790L765 805L700 830M690 950L735 970L720 985L680 965ZM775 790Q780 770 800 768Q820 775 795 785L780 805M685 980L687 1010Q650 1020 600 1060M687 1005Q695 1040 660 1065M850 775Q875 785 905 770Q895 800 905 830Q875 820 855 828Q860 800 850 775Z"/>
    <path d="M885 880Q910 850 955 850L970 860Q930 885 885 880M965 880L995 980L990 1060L1025 1065L1060 960L1020 910M995 940L1040 935M985 1020L1040 1030M1070 910L1055 960L1080 1045L1118 1025L1100 950L1090 910M1060 970L1105 955M920 1000Q940 970 990 985Q960 1010 920 1000M930 1040Q950 1000 995 1005M1150 745L1160 775L1140 790L1155 835L1175 835L1200 805M1150 745Q1165 735 1175 750L1200 765M1200 960Q1150 990 1160 1065M1200 560Q1150 570 1175 620Q1170 670 1190 685M1170 660q-10 20 20 25M1100 895l20 10"/>
    <path d="M310 1065Q320 1040 400 1035L450 1025Q480 1025 490 1065M320 1055h30q10-15 30 0h35q20-15 35 0M750 1065q20-30 45 0M825 1065q30-15 55 0"/>
  </g>
</svg>

<div class="messages">
  <div class="bubble out b-cut"><svg class="tail"><use href="#tail"/></svg></div>
  <div class="bubble in b-perdao"><svg class="tail"><use href="#tail"/></svg>
    <p class="text wide">Oioi perdaoo estou mt ocupada<br>esses dias
      <svg class="emoji" viewBox="679 278 120 119" role="img" aria-label="loudly crying">
        <defs><radialGradient id="face" cx=".5" cy=".35" r=".7"><stop offset="0" stop-color="#ffe95c"/><stop offset=".65" stop-color="#fccb3c"/><stop offset="1" stop-color="#dd8e23"/></radialGradient><linearGradient id="tear" x2="0" y2="1"><stop offset="0" stop-color="#5ba5e8"/><stop offset=".5" stop-color="#84c0ee"/><stop offset="1" stop-color="#3d83d5"/></linearGradient></defs>
        <circle cx="739" cy="337.500" r="58" fill="url(#face)"/>
        <path d="M702 327h18v63q-10-3-18-9zM758 327h17v54q-8 6-17 9z" fill="url(#tear)"/>
        <path d="M697 323q14 10 33 3M748 326q18 7 33-3M697 322q8-9 20-10M781 322q-8-9-20-10" fill="none" stroke="#7a4a13" stroke-width="4" stroke-linecap="round"/>
        <path d="M726 363q0-17 13-17t13 17q0 15-13 15t-13-15z" fill="#713e17"/><path d="M730 353q9-10 18 0v4h-18z" fill="#f6eee2"/><path d="M729 370q10-10 20 0q-3 7-10 7t-10-7z" fill="#c85539"/>
      </svg></p>
    <span class="meta">19:46</span></div>
  <div class="bubble out b-ahh"><p class="text">ahh</p><span class="meta">19:49<svg class="ticks"><use href="#ticks"/></svg></span></div>
  <div class="bubble out b-menina"><svg class="tail"><use href="#tail"/></svg><p class="text">conseguiu resolver o reembolso da<br>menina?</p><span class="meta">19:49<svg class="ticks"><use href="#ticks"/></svg></span></div>
  <div class="date d-thu">Thu, 19 Mar</div>
  <div class="bubble out b-ju"><svg class="tail"><use href="#tail"/></svg><p class="text">ju</p><span class="meta">18:13<svg class="ticks"><use href="#ticks"/></svg></span></div>
  <div class="date d-fri">Fri, 20 Mar</div>
  <div class="bubble in b-oii"><p class="text">Oii</p><span class="meta">06:58</span></div>
  <div class="bubble in b-pix"><svg class="tail"><use href="#tail"/></svg><p class="text">Deixa seu pix fixado pra mim pfv!!</p><span class="meta">06:59</span></div>
  <div class="notice">You pinned a message</div>
  <div class="bubble out b-pronto"><svg class="tail"><use href="#tail"/></svg><p class="text wide">pronto</p><span class="meta">07:02<svg class="ticks"><use href="#ticks"/></svg></span></div>
  <div class="date d-apr">Fri, 3 Apr</div>
</div>
<button class="jump" aria-label="Scroll down"><svg viewBox="0 0 28 18"><path d="M3.500 3.500L14 14L24.500 3.500"/></svg></button>
<div class="edge"></div>
</main>
</body>
</html>
```
FILE: styles.css
```css
* { box-sizing: border-box; }
body { margin: 0; background: #181b20; }
.defs { position: absolute; }
.screen { position: relative; width: 791px; height: 1200px; overflow: hidden; background: #181b20; border-left: 2px solid #111214; font-family: Inter, "Liberation Sans", sans-serif; color: #fafafa; }
.wallpaper { position: absolute; left: -2px; top: 0; width: 791px; height: 1200px; clip-path: inset(0 0 0 2px); }
.art { fill: none; stroke: #272b2f; stroke-width: 5; stroke-linecap: round; stroke-linejoin: round; }
.art text { font: 500 34px Inter, sans-serif; fill: #272b2f; stroke: none; }
.rings { fill: none; stroke-linecap: round; }
.ring-s, .ring-m, .ring-l { stroke: #272b2f; }
.hole-s, .hole-m, .hole-l { stroke: #181b20; }
.ring-s { stroke-width: 9.6px; }
.hole-s { stroke-width: 6.2px; }
.ring-m { stroke-width: 14.4px; }
.hole-m { stroke-width: 11.2px; }
.ring-l { stroke-width: 19.4px; }
.hole-l { stroke-width: 16.2px; }

.messages { position: relative; display: flex; flex-direction: column; height: 1200px; padding: 0 34px 0 32px; }
.bubble { position: relative; display: grid; grid-template-columns: minmax(0, 1fr); flex: none; padding: 10px 20px 0 19px; border-radius: 23px; }
.out { align-self: flex-end; background: #701e2f; color: #fdf6f7; }
.in { align-self: flex-start; background: #242625; }
.text { position: relative; z-index: 1; grid-area: 1 / 1; margin: 0; font-size: 33px; line-height: 45px; letter-spacing: -.31px; white-space: nowrap; font-weight: 400; }
.wide { letter-spacing: -.17px; }
.b-perdao .text { margin-top: -1px; }
.meta { position: relative; z-index: 1; grid-area: 1 / 1; align-self: end; justify-self: end; display: flex; align-items: center; font-size: 24px; line-height: 30px; margin: 0 -1px 8px 0; color: #9b9c9c; letter-spacing: -.5px; font-variant-numeric: tabular-nums; }
.out .meta { color: #bb7f8c; margin-right: -2px; }
.b-pix .meta { margin-right: -1px; }
.ticks { flex: none; width: 34px; height: 22px; margin: -3px 0 0 5px; }
.tail { position: absolute; right: -12px; bottom: 0; width: 34px; height: 44px; color: #701e2f; transform: translateY(2px); }
.in .tail { right: auto; left: -12px; color: #242625; transform: translateY(2px) scaleX(-1); }
.emoji { width: 40px; height: 39.6px; vertical-align: -7px; margin-left: 2px; }

.b-cut { width: 209px; height: 29px; margin-top: -20px; }
.b-perdao { width: 532px; height: 112px; margin-top: 28px; }
.b-ahh { width: 226px; height: 68px; margin-top: 27px; }
.b-menina { width: 579px; height: 113px; margin-top: 10px; }
.d-thu { margin-top: 74px; }
.b-ju { width: 196px; height: 68px; margin-top: 29px; }
.d-fri { margin-top: 75px; }
.b-oii { width: 173px; height: 68px; margin-top: 29px; }
.b-pix { width: 559px; height: 102px; margin-top: 10px; }
.b-pronto { width: 271px; height: 68px; margin-top: 27px; }
.d-apr { margin-top: 74px; }

.date { flex: none; align-self: center; width: 200px; height: 37px; border-radius: 16px; background: #171818; text-align: center; font-size: 25px; line-height: 38px; font-weight: 600; letter-spacing: .7px; }
.notice { flex: none; align-self: center; width: 324px; height: 63px; margin-top: 27px; border-radius: 18px; background: #171818; text-align: center; font-size: 25px; line-height: 61px; letter-spacing: .4px; }
.jump { position: absolute; left: 706px; top: 1083px; width: 64px; height: 64px; padding: 0; border: 0; border-radius: 50%; background: #242625; display: grid; place-items: center; }
.jump svg { width: 28px; height: 18px; fill: none; stroke: #fff; stroke-width: 3.6; stroke-linecap: round; stroke-linejoin: round; }
.edge { position: absolute; left: 0; right: 0; bottom: 0; height: 4px; background: linear-gradient(90deg, #2a2a31 0 45%, #48222f 70%); }
```
